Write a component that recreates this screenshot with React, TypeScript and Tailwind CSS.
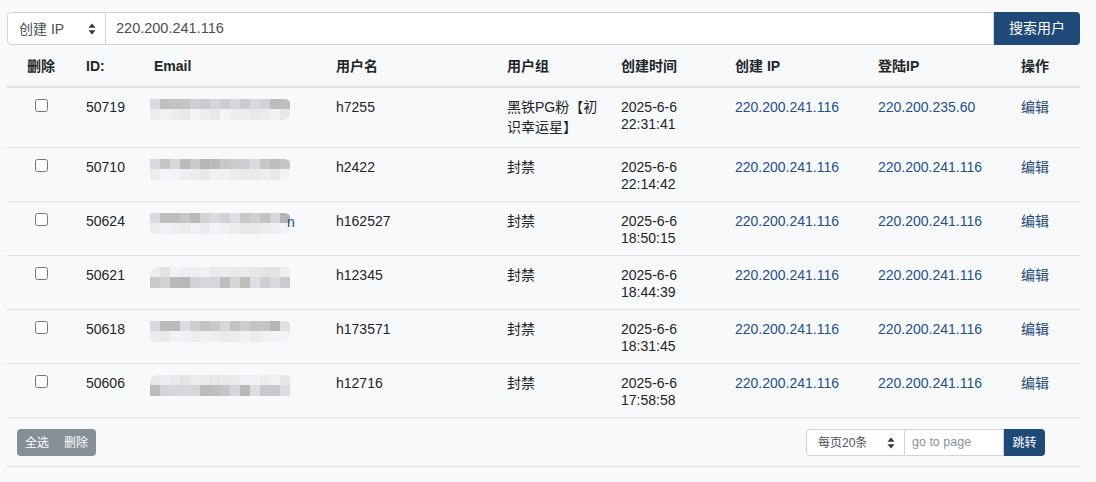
import React from "react";

type Row = {
  id: string;
  user: string;
  group: string[];
  date: string;
  time: string;
  cip: string;
  lip: string;
  tail?: string;
  seed: number;
  shape: "top" | "bottom";
};

const rows: Row[] = [
  { id: "50719", user: "h7255", group: ["黑铁PG粉【初", "识幸运星】"], date: "2025-6-6", time: "22:31:41", cip: "220.200.241.116", lip: "220.200.235.60", seed: 3, shape: "top" },
  { id: "50710", user: "h2422", group: ["封禁"], date: "2025-6-6", time: "22:14:42", cip: "220.200.241.116", lip: "220.200.241.116", seed: 7, shape: "top" },
  { id: "50624", user: "h162527", group: ["封禁"], date: "2025-6-6", time: "18:50:15", cip: "220.200.241.116", lip: "220.200.241.116", tail: "n", seed: 11, shape: "top" },
  { id: "50621", user: "h12345", group: ["封禁"], date: "2025-6-6", time: "18:44:39", cip: "220.200.241.116", lip: "220.200.241.116", seed: 17, shape: "bottom" },
  { id: "50618", user: "h173571", group: ["封禁"], date: "2025-6-6", time: "18:31:45", cip: "220.200.241.116", lip: "220.200.241.116", seed: 23, shape: "top" },
  { id: "50606", user: "h12716", group: ["封禁"], date: "2025-6-6", time: "17:58:58", cip: "220.200.241.116", lip: "220.200.241.116", seed: 29, shape: "bottom" },
];

function gray(seed: number, i: number, base: number, spread: number) {
  const x = Math.sin(seed * 97.13 + i * 12.9898) * 43758.5453;
  const f = x - Math.floor(x);
  const v = Math.round(base + f * spread);
  const b = Math.min(255, v + Math.round((f - 0.5) * 8) + 3);
  return `rgb(${v},${v + 1},${b})`;
}

function Mosaic({ seed, shape }: { seed: number; shape: "top" | "bottom" }) {
  const n = 14;
  const top = Array.from({ length: n }, (_, i) =>
    shape === "top" ? gray(seed, i, 180, 45) : gray(seed, i, 218, 22)
  );
  const bottom = Array.from({ length: n }, (_, i) =>
    shape === "top" ? gray(seed + 50, i, 222, 20) : gray(seed + 50, i, 178, 45)
  );
  return (
    <div className="flex flex-col ml-[-4px] w-[142px]">
      <div className={`flex overflow-hidden h-[10px] ${shape === "top" ? "rounded-tr-[8px]" : "rounded-tl-[8px] rounded-tr-[8px] opacity-70"}`}>
        {top.map((c, i) => (
          <div key={i} className="w-[10px] h-[10px] shrink-0" style={{ backgroundColor: c }} />
        ))}
      </div>
      <div className={`flex overflow-hidden h-[11px] ${shape === "top" ? "rounded-br-[10px] rounded-bl-[4px] opacity-70" : "rounded-br-[4px]"}`}>
        {bottom.map((c, i) => (
          <div key={i} className="w-[10px] h-[11px] shrink-0" style={{ backgroundColor: c }} />
        ))}
      </div>
    </div>
  );
}

function UpDown({ size = 8 }: { size?: number }) {
  return (
    <svg width={size} height={size + 4} viewBox="0 0 8 12" className="text-[#343a40]">
      <path d="M4 0.5 L7.5 4.8 H0.5 Z" fill="currentColor" />
      <path d="M4 11.5 L7.5 7.2 H0.5 Z" fill="currentColor" />
    </svg>
  );
}

export default function App() {
  const font = "font-['Liberation_Sans','Noto_Sans_CJK_SC',sans-serif]";
  return (
    <div className={`w-[1096px] h-[482px] bg-[#f8f9fa] ${font} text-[14px] text-[#212529] overflow-hidden`}>
      <div className="pl-[7px] w-[1080px] pt-[12px]">
        {/* search bar */}
        <div className="flex h-[33px]">
          <div className="w-[99px] flex items-center justify-between pl-[11px] pr-[9px] bg-white border border-[#ced4da] rounded-l-[4px] text-[#495057] leading-none">
            <span>创建 IP</span>
            <UpDown />
          </div>
          <div className="flex-1 flex items-center pl-[10px] bg-white border border-l-0 border-[#ced4da] text-[#495057] text-[14.5px]">
            220.200.241.116
          </div>
          <button className="w-[86px] bg-[#1f4a78] text-white rounded-r-[4px] text-[14px]">搜索用户</button>
        </div>

        {/* table */}
        <table className="table-fixed w-[1073px] border-collapse leading-[16px]">
          <colgroup>
            <col className="w-[68px]" />
            <col className="w-[68px]" />
            <col className="w-[182px]" />
            <col className="w-[171px]" />
            <col className="w-[114px]" />
            <col className="w-[114px]" />
            <col className="w-[143px]" />
            <col className="w-[143px]" />
            <col className="w-[70px]" />
          </colgroup>
          <thead>
            <tr className="border-b-2 border-[#dee2e6] h-[42px]">
              <th className="text-center font-bold px-[11px]">删除</th>
              <th className="text-left font-bold px-[11px]">ID:</th>
              <th className="text-left font-bold px-[11px]">Email</th>
              <th className="text-left font-bold px-[11px]">用户名</th>
              <th className="text-left font-bold px-[11px]">用户组</th>
              <th className="text-left font-bold px-[11px]">创建时间</th>
              <th className="text-left font-bold px-[11px]">创建 IP</th>
              <th className="text-left font-bold px-[11px]">登陆IP</th>
              <th className="text-left font-bold px-[11px]">操作</th>
            </tr>
          </thead>
          <tbody>
            {rows.map((r) => (
              <tr key={r.id} className="border-b border-[#dee2e6] align-top">
                <td className="text-center pt-[11px] pb-[8px]">
                  <input type="checkbox" className="w-[13px] h-[13px] m-0 align-top" />
                </td>
                <td className="px-[11px] pt-[11px] pb-[8px]">{r.id}</td>
                <td className="px-[11px] pt-[11px] pb-[8px]">
                  <div className="flex items-start relative">
                    <Mosaic seed={r.seed} shape={r.shape} />
                    {r.tail && <span className="absolute left-[133px] top-[1px] text-[#24508a]">{r.tail}</span>}
                  </div>
                </td>
                <td className="px-[11px] pt-[11px] pb-[8px]">{r.user}</td>
                <td className="px-[11px] pt-[12px] pb-[10px] leading-[20px]">
                  <div className="mt-[-3px]">
                    {r.group.map((g, i) => (
                      <div key={i} className="whitespace-nowrap">{g}</div>
                    ))}
                  </div>
                </td>
                <td className="px-[11px] pt-[11px] pb-[8px]">
                  <div className="h-[17px]">{r.date}</div>
                  <div className="h-[17px]">{r.time}</div>
                </td>
                <td className="px-[11px] pt-[11px] pb-[8px] text-[#24508a]">{r.cip}</td>
                <td className="px-[11px] pt-[11px] pb-[8px] text-[#24508a]">{r.lip}</td>
                <td className="px-[11px] pt-[11px] pb-[8px] text-[#1f4a78]">
                  <div className="h-[17px]">编辑</div>
                </td>
              </tr>
            ))}
          </tbody>
        </table>

        {/* footer */}
        <div className="w-[1073px] flex items-center justify-between pt-[11px] pb-[10px] border-b border-[#dee2e6]">
          <div className="ml-[10px] flex h-[27px] rounded-[4px] bg-[#868e96] text-white text-[12px] overflow-hidden">
            <button className="pl-[8px] pr-[7px]">全选</button>
            <button className="pl-[8px] pr-[8px]">删除</button>
          </div>
          <div className="mr-[35px] flex h-[27px] text-[12px]">
            <div className="w-[99px] flex items-center justify-between pl-[11px] pr-[9px] bg-white border border-[#ced4da] rounded-l-[4px] text-[#495057]">
              <span>每页20条</span>
              <UpDown />
            </div>
            <div className="w-[99px] flex items-center pl-[7px] bg-white border border-l-0 border-[#ced4da] text-[#8b929a] text-[12.5px]">
              go to page
            </div>
            <button className="w-[41px] bg-[#1f4a78] text-white rounded-r-[4px]">跳转</button>
          </div>
        </div>
      </div>
    </div>
  );
}
